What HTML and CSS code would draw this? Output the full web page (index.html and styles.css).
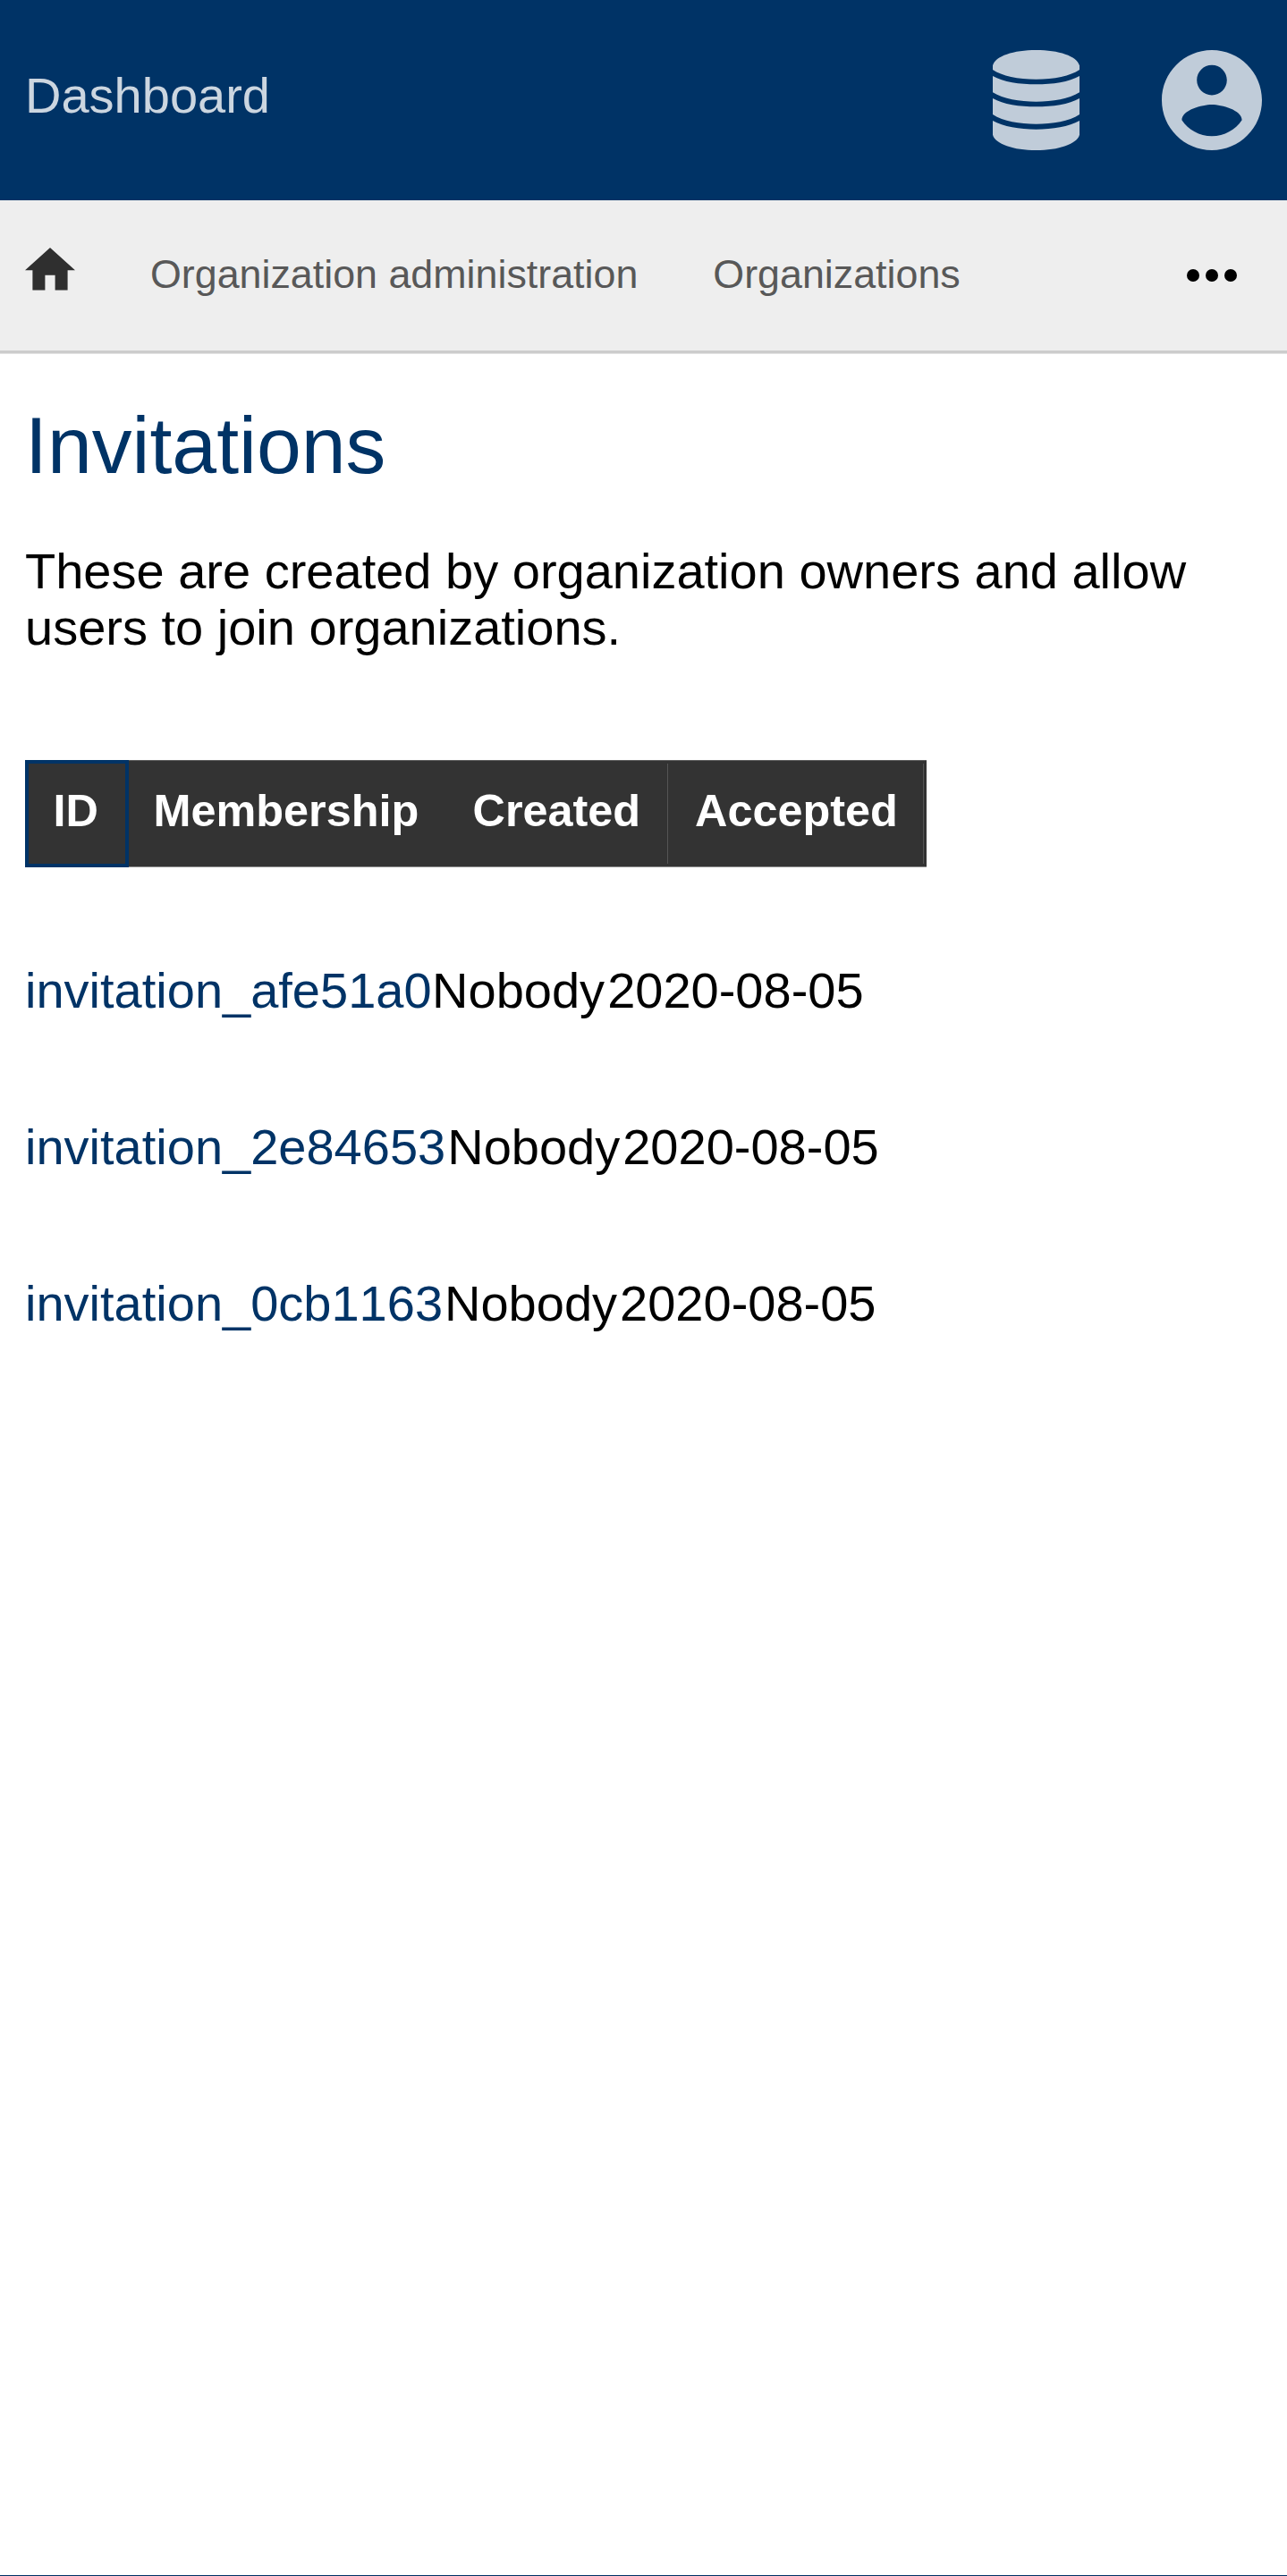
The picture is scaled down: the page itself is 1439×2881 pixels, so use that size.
FILE: index.html
```html
<!DOCTYPE html>
<html lang="en">
<head>
<meta charset="utf-8">
<title>Invitations</title>
<link rel="stylesheet" href="styles.css">
</head>
<body>
<header class="topbar">
  <a class="brand">Dashboard</a>
  <svg class="icon-db" viewBox="0 0 290 336" preserveAspectRatio="none"><path d="M0 52C8 20 70 0 145 0S282 20 290 52V66C260 87 205 98 145 98S30 87 0 66ZM0 87C35 107 90 115 145 115S255 107 290 87V142C255 164 200 173 145 173S35 164 0 142ZM0 162C35 182 90 190 145 190S255 182 290 162V216C255 239 200 248 145 248S35 239 0 216ZM0 237C35 257 90 266 145 266S255 257 290 237V284C282 315 220 336 145 336S8 315 0 284Z"/></svg>
  <svg class="icon-user" viewBox="2 2 20 20"><path d="M12 2C6.48 2 2 6.48 2 12s4.480 10 10 10 10-4.480 10-10S17.520 2 12 2zm0 3c1.660 0 3 1.340 3 3s-1.340 3-3 3-3-1.340-3-3 1.340-3 3-3zm0 14.200c-2.500 0-4.710-1.280-6-3.220.030-1.990 4-3.080 6-3.080 1.990 0 5.970 1.090 6 3.080-1.290 1.940-3.500 3.220-6 3.220z"/></svg>
</header>
<nav class="subnav">
  <svg class="icon-home" viewBox="2 3 20 17"><path d="M10 20v-6h4v6h5v-8h3L12 3 2 12h3v8z"/></svg>
  <a class="nav-link">Organization administration</a>
  <a class="nav-link">Organizations</a>
  <svg class="icon-more" viewBox="0 0 24 24"><circle cx="6" cy="12" r="2"/><circle cx="12" cy="12" r="2"/><circle cx="18" cy="12" r="2"/></svg>
</nav>
<main class="content">
  <h1 class="title">Invitations</h1>
  <p class="intro">These are created by organization owners and allow users to join organizations.</p>
  <div class="table-head">
    <div class="th sorted">ID</div>
    <div class="th">Membership</div>
    <div class="th">Created</div>
    <div class="th last">Accepted</div>
  </div>
  <div class="rows">
    <div class="row"><a class="link">invitation_afe51a0</a><span>Nobody</span><span>2020-08-05</span></div>
    <div class="row"><a class="link">invitation_2e84653</a><span>Nobody</span><span>2020-08-05</span></div>
    <div class="row"><a class="link">invitation_0cb1163</a><span>Nobody</span><span>2020-08-05</span></div>
  </div>
</main>
<footer class="footer"></footer>
</body>
</html>
```
FILE: styles.css
```css
* { box-sizing: border-box; }
body {
  margin: 0;
  height: 2881px;
  display: flex;
  flex-direction: column;
  overflow: hidden;
  background: #fff;
  color: #000;
  font: 56px/63px "Liberation Sans", Arial, sans-serif;
}
svg { display: block; flex: none; }
.topbar {
  height: 224px;
  padding: 56px 28.5px 56px 28px;
  display: flex;
  background: #003366;
}
.brand { margin-right: auto; line-height: 101px; color: #ccd6e0; }
.icon-db { width: 97px; height: 112px; margin-right: 91.5px; fill: #c0ccd9; }
.icon-user { width: 112px; height: 112px; fill: #c0ccd9; }
.subnav {
  height: 171px;
  padding: 0 42.5px 0 28px;
  display: flex;
  gap: 84px;
  background: #eee;
  border-bottom: 3px solid #ccc;
  box-shadow: 0 1px #e3e3e3;
}
.icon-home { width: 56px; height: 47.6px; margin-top: 53px; fill: #2f2f2f; }
.nav-link { font-size: 44.8px; line-height: 165px; color: #585858; white-space: nowrap; }
.icon-more { width: 84px; height: 84px; margin: 42px 0 0 auto; }
.content { flex: 1; padding: 0 28px; }
.title {
  margin: 43px 0 48px;
  font-size: 89.6px;
  font-weight: 400;
  line-height: 121px;
  color: #003366;
}
.intro { margin: 0 0 117px; }
.table-head {
  width: 1008px;
  height: 120px;
  display: grid;
  grid-template-columns: 115.5px 357px 249px 286.5px;
  background: #333;
  border-top: 1px solid #5c5c5c;
  border-bottom: 1px solid #8c8c8c;
  color: #fff;
  font-size: 50.4px;
  font-weight: 700;
  line-height: 111px;
}
.th { padding-left: 28px; white-space: nowrap; }
.sorted {
  margin: -1px 0;
  height: 120px;
  padding-left: 27.5px;
  border: 4px solid #003366;
  line-height: 105px;
}
.last {
  margin: 3px 3px 3px -4px;
  padding-left: 30.5px;
  border: 1px solid #555;
  border-width: 0 1px;
  line-height: 105px;
}
.rows { margin-top: 50px; }
.row {
  height: 175px;
  display: flex;
  gap: 3px;
  line-height: 175px;
  font-kerning: none;
}
.link { margin-right: -1px; color: #003366; }
.row:first-child .link { margin-right: -2.5px; }
.footer { height: 1px; background: #003366; }
```
